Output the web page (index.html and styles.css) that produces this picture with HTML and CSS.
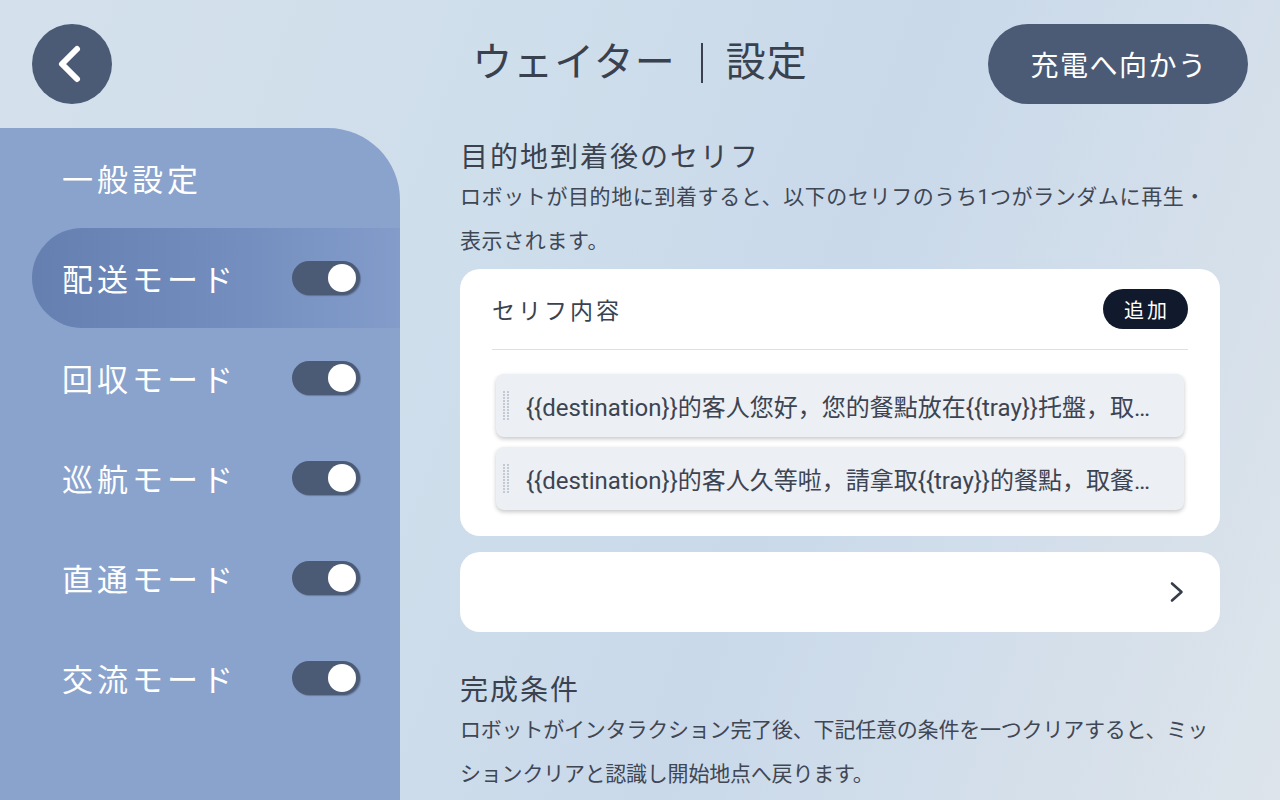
FILE: index.html
```html
<!DOCTYPE html>
<html lang="ja">
<head>
<meta charset="utf-8">
<title>ウェイター｜設定</title>
<link rel="stylesheet" href="styles.css">
</head>
<body>
<div class="app">
  <header class="topbar">
    <button class="back" aria-label="戻る">
      <svg width="80" height="80" viewBox="0 0 80 80"><path d="M45 25 L30 40 L45 55" fill="none" stroke="#fff" stroke-width="6" stroke-linecap="round" stroke-linejoin="round"/></svg>
    </button>
    <h1 class="title"><span>ウェイター</span><span class="sep"></span><span>設定</span></h1>
    <button class="charge">充電へ向かう</button>
  </header>
  <div class="body">
    <nav class="sidebar">
      <div class="side-title">一般設定</div>
      <div class="mode active"><span class="mode-name">配送モード</span><span class="toggle"><span class="knob"></span></span></div>
      <div class="mode"><span class="mode-name">回収モード</span><span class="toggle"><span class="knob"></span></span></div>
      <div class="mode"><span class="mode-name">巡航モード</span><span class="toggle"><span class="knob"></span></span></div>
      <div class="mode"><span class="mode-name">直通モード</span><span class="toggle"><span class="knob"></span></span></div>
      <div class="mode"><span class="mode-name">交流モード</span><span class="toggle"><span class="knob"></span></span></div>
    </nav>
    <main class="content">
      <section class="section">
        <h2 class="sec-title">目的地到着後のセリフ</h2>
        <p class="desc">ロボットが目的地に到着すると、以下のセリフのうち1つがランダムに再生・<br>表示されます。</p>
        <div class="card lines">
          <div class="card-head">
            <span class="card-label">セリフ内容</span>
            <button class="add">追加</button>
          </div>
          <div class="divider"></div>
          <ul class="items">
            <li class="item"><span class="grip"></span><span class="item-text">{{destination}}的客人您好，您的餐點放在{{tray}}托盤，取餐後請按完成鍵</span></li>
            <li class="item"><span class="grip"></span><span class="item-text">{{destination}}的客人久等啦，請拿取{{tray}}的餐點，取餐後請按完成鍵</span></li>
          </ul>
        </div>
        <div class="card link">
          <svg width="14" height="22" viewBox="0 0 14 22"><path d="M2 2.5 L11.5 11 L2 19.5" fill="none" stroke="#353d4b" stroke-width="2.6" stroke-linecap="round" stroke-linejoin="round"/></svg>
        </div>
      </section>
      <section class="section second">
        <h2 class="sec-title">完成条件</h2>
        <p class="desc tight">ロボットがインタラクション完了後、下記任意の条件を一つクリアすると、ミッ<br>ションクリアと認識し開始地点へ戻ります。</p>
      </section>
    </main>
  </div>
</div>
</body>
</html>
```

FILE: styles.css
```css
* { box-sizing: border-box; }

html, body {
  margin: 0;
  padding: 0;
  width: 1280px;
  height: 800px;
  overflow: hidden;
}

body {
  font-family: "Roboto", "Noto Sans CJK JP", sans-serif;
  color: #3a4250;
  background: linear-gradient(110deg, #d4e1ec 0%, #cfdeeb 35%, #c9d9ea 60%, #dde4eb 100%);
}

.app {
  width: 1280px;
  height: 800px;
  display: flex;
  flex-direction: column;
}

/* top bar */
.topbar {
  height: 128px;
  padding: 24px 32px;
  display: grid;
  grid-template-columns: 1fr auto 1fr;
  align-items: center;
}

.back {
  width: 80px;
  height: 80px;
  border: 0;
  padding: 0;
  border-radius: 50%;
  background: #4b5a75;
  display: flex;
  align-items: center;
  justify-content: center;
  justify-self: start;
}

.back svg { display: block; }

.title {
  margin: 0;
  display: flex;
  align-items: center;
  font-size: 40px;
  font-weight: 400;
  letter-spacing: 1px;
  color: #39414f;
  line-height: 56px;
  margin-top: -2px;
}

.sep {
  width: 2px;
  height: 40px;
  background: #39414f;
  margin: 0 23px 0 25px;
}

.charge {
  justify-self: end;
  width: 260px;
  height: 80px;
  border: 0;
  border-radius: 40px;
  background: #4b5a75;
  color: #fff;
  font-family: inherit;
  font-size: 28px;
  letter-spacing: 1.5px;
  padding: 0 0 0 2px;
}

/* body */
.body {
  flex: 1;
  display: flex;
  min-height: 0;
}

.sidebar {
  width: 400px;
  flex: none;
  background: #8aa3cd;
  border-top-right-radius: 72px;
  display: flex;
  flex-direction: column;
}

.side-title {
  height: 100px;
  padding-left: 62px;
  padding-bottom: 2px;
  display: flex;
  align-items: center;
  color: #fff;
  font-size: 31px;
  letter-spacing: 4px;
}

.mode {
  height: 100px;
  margin-left: 32px;
  padding: 0 40px 2px 30px;
  display: flex;
  align-items: center;
  justify-content: space-between;
  border-radius: 50px 0 0 50px;
  color: #fff;
  font-size: 31px;
  letter-spacing: 4px;
}

.mode .toggle { margin-top: 2px; }

.mode.active {
  background: linear-gradient(90deg, #6580b0 0%, #718cbd 50%, #839cca 100%);
}

.toggle {
  width: 68px;
  height: 34px;
  border-radius: 17px;
  background: #4b5a75;
  box-shadow: 1px 1px 1px rgba(40, 50, 70, 0.35);
  display: flex;
  align-items: center;
  justify-content: flex-end;
  padding-right: 4px;
}

.knob {
  width: 28px;
  height: 28px;
  border-radius: 50%;
  background: #fff;
}

/* content */
.content {
  width: 820px;
  padding: 13px 0 0 60px;
}

.sec-title {
  margin: 0;
  font-size: 28px;
  font-weight: 400;
  line-height: 34px;
  letter-spacing: 2px;
  color: #3a4250;
}

.desc {
  margin: 0;
  font-size: 21px;
  line-height: 44px;
  letter-spacing: 0.6px;
  color: #3f4654;
  white-space: nowrap;
}

.desc.tight { letter-spacing: -0.2px; }

.card {
  background: #fff;
  border-radius: 20px;
  width: 760px;
}

.lines {
  margin-top: 6px;
  padding: 20px 32px 26px;
}

.card-head {
  height: 40px;
  display: flex;
  align-items: center;
  justify-content: space-between;
}

.card-label {
  font-size: 23px;
  letter-spacing: 3px;
  color: #3a4250;
}

.add {
  height: 40px;
  padding: 0 18px 0 21px;
  border: 0;
  border-radius: 20px;
  background: #111a2d;
  color: #fff;
  font-family: inherit;
  font-size: 20px;
  letter-spacing: 3px;
}

.divider {
  margin-top: 20px;
  height: 1px;
  background: #dde1e7;
}

.items {
  list-style: none;
  margin: 24px 4px 0;
  padding: 0;
  display: flex;
  flex-direction: column;
  gap: 10px;
}

.item {
  height: 63px;
  display: flex;
  align-items: center;
  padding: 0 32px 0 7px;
  background: #eceff3;
  border-radius: 8px;
  box-shadow: 0 2px 4px rgba(0, 0, 0, 0.22);
}

.grip {
  flex: none;
  width: 7px;
  height: 30px;
  margin-right: 16px;
  background-image: radial-gradient(circle at 1px 1px, #c4cad4 1px, transparent 1.2px);
  background-size: 4px 3px;
}

.item-text {
  flex: 1;
  min-width: 0;
  white-space: nowrap;
  overflow: hidden;
  text-overflow: ellipsis;
  font-size: 24px;
  color: #3c4452;
}

.link {
  margin-top: 16px;
  height: 80px;
  display: flex;
  align-items: center;
  justify-content: flex-end;
  padding-right: 36px;
}

.link svg { display: block; }

.second { margin-top: 42px; }
```
